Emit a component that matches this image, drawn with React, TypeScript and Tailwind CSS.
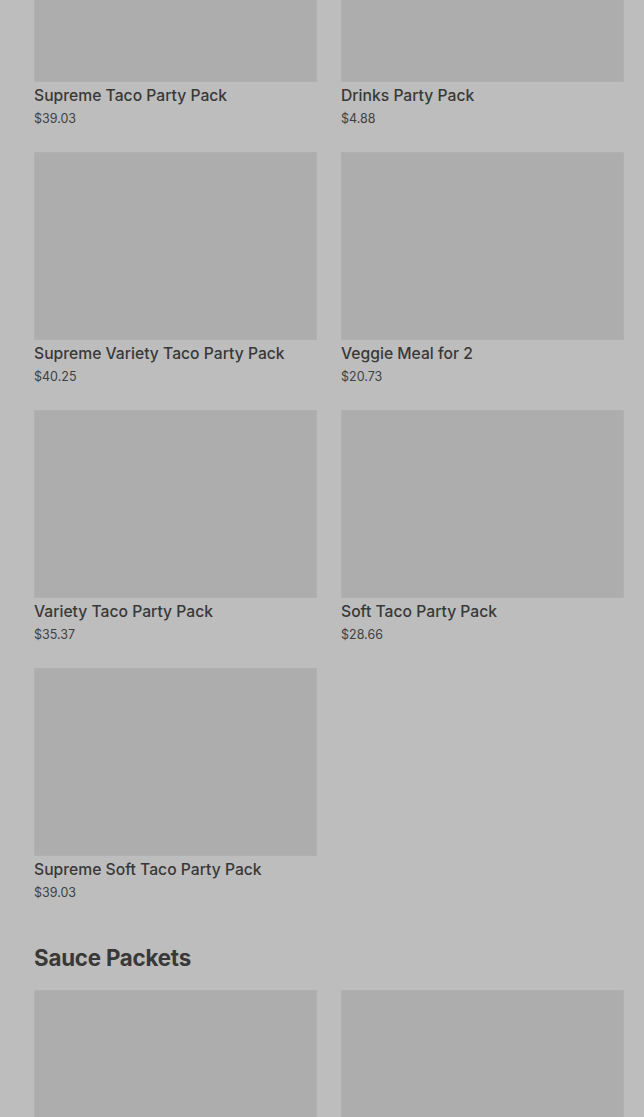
const partyPacks = [
  { name: 'Supreme Taco Party Pack', price: '$39.03' },
  { name: 'Drinks Party Pack', price: '$4.88' },
  { name: 'Supreme Variety Taco Party Pack', price: '$40.25' },
  { name: 'Veggie Meal for 2', price: '$20.73' },
  { name: 'Variety Taco Party Pack', price: '$35.37' },
  { name: 'Soft Taco Party Pack', price: '$28.66' },
  { name: 'Supreme Soft Taco Party Pack', price: '$39.03' },
];

function ProductCard({ name, price }: { name?: string; price?: string }) {
  return (
    <div className="flex flex-col">
      <div className="h-[188px] w-full bg-[#adadad] shadow-[inset_0_0_2px_rgba(255,255,255,0.15)]" />
      {name && (
        <>
          <p className="mt-[2px] text-[15.7px] leading-6 font-medium text-[#383838]">{name}</p>
          <p className="mt-px text-[12.5px] leading-5 text-[#3f3f3f]">{price}</p>
        </>
      )}
    </div>
  );
}

export default function App() {
  return (
    <div
      className="h-[1117px] w-full overflow-hidden bg-[#bdbdbd]"
      style={{ fontFamily: 'Inter, "Noto Sans", sans-serif' }}
    >
      <div className="-mt-[106px] pl-[34px] pr-[20px]">
        <div className="grid grid-cols-2 gap-x-6 gap-y-[23px]">
          {partyPacks.map((p) => (
            <ProductCard key={p.name} name={p.name} price={p.price} />
          ))}
        </div>

        <h2 className="mt-[39px] text-[22.3px] leading-8 font-bold tracking-[-0.2px] text-[#383838]">
          Sauce Packets
        </h2>
        <div className="mt-[16px] grid grid-cols-2 gap-x-6">
          <ProductCard />
          <ProductCard />
        </div>
      </div>
    </div>
  );
}
